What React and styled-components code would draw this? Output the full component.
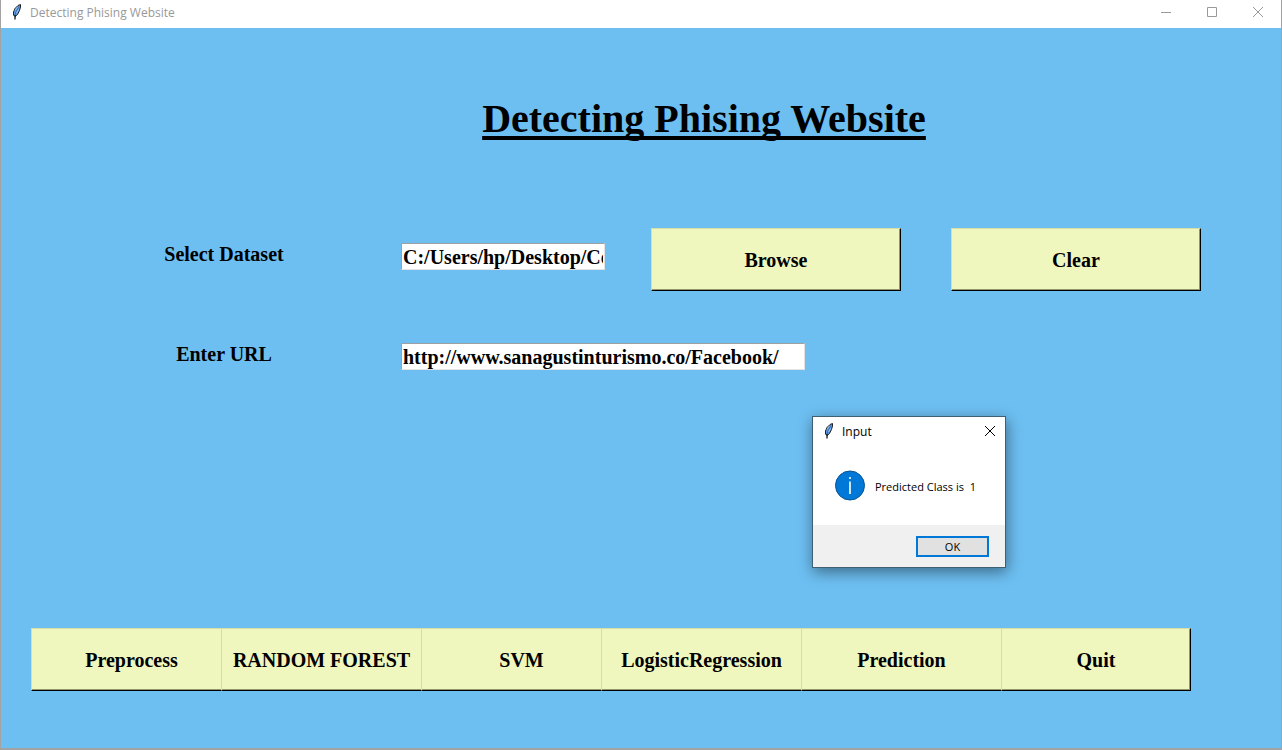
import React, { useState } from "react";
import styled, { createGlobalStyle } from "styled-components";

const GlobalStyle = createGlobalStyle`
  * { box-sizing: border-box; }
  body { margin: 0; background: #a3a3a3; }
`;

const ui = `"Open Sans", "Noto Sans", sans-serif`;
const serif = `"Liberation Serif", "Times New Roman", serif`;

const Window = styled.div`
  display: flex;
  flex-direction: column;
  min-height: 100vh;
  border: solid #a3a3a3;
  border-width: 0 1px 2px 1px;
  background: #6dbff2;
  color: #000;
  font: bold 20px/22px ${serif};
`;

const TitleBar = styled.header`
  display: flex;
  align-items: center;
  height: 28px;
  padding: 0 8px 4px 10px;
  background: #fff;
  color: #999;
  font: 12px/16px ${ui};
`;

const TitleText = styled.span`
  flex: 1;
  margin-left: 7px;
  padding-top: 2px;
`;

const CaptionButton = styled.button`
  display: grid;
  place-items: center;
  width: 30px;
  height: 24px;
  margin-left: 16px;
  padding: 0;
  border: 0;
  background: none;
  color: inherit;
`;

const Content = styled.main`
  position: relative;
  flex: 1;
  display: flex;
  flex-direction: column;
`;

const Heading = styled.h1`
  margin: 68px 0 0 126px;
  text-align: center;
  font: bold 40px/46px ${serif};
  text-decoration: underline;
  text-decoration-thickness: 4px;
  text-underline-offset: 4px;
  text-decoration-skip-ink: none;
`;

const Form = styled.form`
  display: grid;
  grid-template-columns: 300fr 250fr 250fr 50fr 250fr;
  row-gap: 37px;
  margin: 86px 80px 0 100px;
`;

const Label = styled.label`
  margin: 15px 54px 0 0;
  text-align: center;
`;

const Entry = styled.input`
  grid-column: ${(p) => (p.$wide ? "2 / 4" : "2")};
  width: ${(p) => (p.$wide ? "404px" : "204px")};
  height: 27px;
  margin-top: 15px;
  padding: 1px 1px 0;
  border: 1px solid;
  border-color: #a0a0a0 #e3e3e3 #e3e3e3 #a0a0a0;
  background: #fff;
  color: #000;
  font: inherit;
  outline: 0;
`;

const RaisedButton = styled.button`
  grid-column: ${(p) => p.$column || "auto"};
  height: 63px;
  padding: 0;
  border: 1px solid;
  border-color: #d8dda8 #000 #000 #d8dda8;
  box-shadow: inset -1px -1px #92966d;
  background: #eff6be;
  color: #000;
  font: inherit;
`;

const Toolbar = styled.nav`
  display: grid;
  grid-template-columns: 190fr 200fr 180fr 200fr 200fr 190fr;
  margin: auto 90px 57px 30px;
`;

/* A tucked button runs on under the left edge of the one after it. */
const ToolButton = styled(RaisedButton)`
  margin-right: ${(p) => p.$tuck || 0}px;
  &:not(:last-child) {
    border-right: 0;
    box-shadow: inset 0 -1px #92966d;
  }
`;

const Dialog = styled.section`
  position: absolute;
  top: 388px;
  left: 811px;
  width: 194px;
  border: 1px solid #3f5f74;
  background: #fff;
  box-shadow: 1px 4px 14px rgba(0, 0, 0, 0.45);
  font: 11px/16px ${ui};
`;

const DialogTitle = styled.header`
  display: flex;
  align-items: center;
  height: 28px;
  padding: 0 0 0 10px;
  font-size: 12px;
`;

const DialogClose = styled(CaptionButton)`
  margin: 0;
`;

const DialogBody = styled.div`
  display: flex;
  align-items: center;
  gap: 9px;
  height: 80px;
  padding: 0 22px;
`;

const Message = styled.p`
  margin: 0;
  padding-top: 3px;
  white-space: pre;
`;

const DialogFooter = styled.footer`
  display: flex;
  justify-content: flex-end;
  padding: 11px 16px 10px;
  background: #f0f0f0;
`;

const OkButton = styled.button`
  width: 73px;
  height: 21px;
  padding: 0;
  border: 2px solid #0078d7;
  background: #e1e1e1;
  color: #000;
  font: inherit;
`;

const Feather = () => (
  <svg width="12" height="16" viewBox="0 0 12 16" aria-hidden="true">
    <path d="M9.500 .5L7 1.500L4 4.500L2.500 8L2.500 11L4 12.500L6.500 10.500L8.500 6.500L9.500 3Z" fill="#5a9ae6" stroke="#222" />
    <path d="M8 2.500L5.500 6.500L4 11" fill="none" stroke="#2c5c9c" strokeWidth=".8" />
    <path d="M4 6.500L6.500 3M5.500 9L7.500 5.500" stroke="#a9cdf5" strokeWidth=".8" />
    <path d="M4 11V15.500" stroke="#000" strokeWidth="1.2" />
  </svg>
);

const Cross = () => (
  <svg width="12" height="12" viewBox="0 0 12 12" aria-hidden="true">
    <path d="M1 1L11 11M11 1L1 11" stroke="currentColor" />
  </svg>
);

const Info = () => (
  <svg width="31" height="31" viewBox="0 0 31 31" aria-hidden="true">
    <circle cx="15" cy="15.500" r="14.500" fill="#0078d7" stroke="#075394" />
    <path d="M14.200 11.500H15.800V24H14.200ZM14.200 7H15.800V9H14.200Z" fill="#fff" />
  </svg>
);

const actions = [
  { name: "Preprocess", tuck: -10 },
  { name: "RANDOM FOREST" },
  { name: "SVM", tuck: -20 },
  { name: "LogisticRegression" },
  { name: "Prediction" },
  { name: "Quit" },
];

export default function App() {
  const [dataset, setDataset] = useState("C:/Users/hp/Desktop/Code/dataset.csv");
  const [url, setUrl] = useState("http://www.sanagustinturismo.co/Facebook/");
  const [open, setOpen] = useState(true);

  const clear = () => {
    setDataset("");
    setUrl("");
  };

  return (
    <>
      <GlobalStyle />
      <Window>
        <TitleBar>
          <Feather />
          <TitleText>Detecting Phising Website</TitleText>
          <CaptionButton aria-label="Minimize">
            <svg width="12" height="12" aria-hidden="true">
              <path d="M1 6.500H11" stroke="currentColor" />
            </svg>
          </CaptionButton>
          <CaptionButton aria-label="Maximize">
            <svg width="12" height="12" aria-hidden="true">
              <path d="M1.500 1.500H10.500V10.500H1.500Z" fill="none" stroke="currentColor" />
            </svg>
          </CaptionButton>
          <CaptionButton aria-label="Close">
            <Cross />
          </CaptionButton>
        </TitleBar>
        <Content>
          <Heading>Detecting Phising Website</Heading>
          <Form onSubmit={(e) => e.preventDefault()}>
            <Label htmlFor="dataset">Select Dataset</Label>
            <Entry id="dataset" value={dataset} onChange={(e) => setDataset(e.target.value)} />
            <RaisedButton type="button">Browse</RaisedButton>
            <RaisedButton type="button" $column="5" onClick={clear}>Clear</RaisedButton>
            <Label htmlFor="url">Enter URL</Label>
            <Entry id="url" $wide value={url} onChange={(e) => setUrl(e.target.value)} />
          </Form>
          <Toolbar>
            {actions.map(({ name, tuck }) => (
              <ToolButton key={name} type="button" $tuck={tuck}>{name}</ToolButton>
            ))}
          </Toolbar>
          {open && (
            <Dialog role="dialog" aria-label="Input">
              <DialogTitle>
                <Feather />
                <TitleText>Input</TitleText>
                <DialogClose aria-label="Close" onClick={() => setOpen(false)}>
                  <Cross />
                </DialogClose>
              </DialogTitle>
              <DialogBody>
                <Info />
                <Message>{"Predicted Class is  1"}</Message>
              </DialogBody>
              <DialogFooter>
                <OkButton type="button" onClick={() => setOpen(false)}>OK</OkButton>
              </DialogFooter>
            </Dialog>
          )}
        </Content>
      </Window>
    </>
  );
}
